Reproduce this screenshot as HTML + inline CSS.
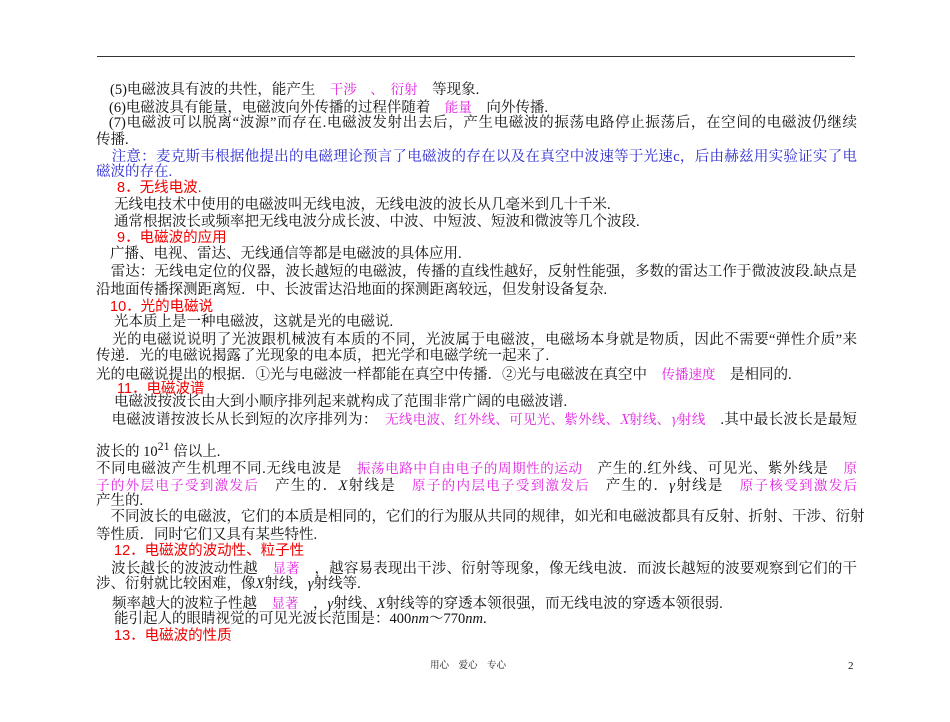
<html><head><meta charset="utf-8"><style>
body{margin:0;width:950px;height:722px;background:#fff;position:relative;overflow:hidden;font-family:"Liberation Serif","Noto Serif CJK SC",serif;color:#111}
.l{position:absolute;white-space:nowrap;font-size:14.5px;line-height:18px}
.j{width:761px;text-align:justify;text-align-last:justify}
.m{color:#e020e0;font-family:"Noto Serif CJK SC",serif;font-size:13.5px}
.b{color:#2a2ad0}
.r{color:#f00000;font-family:"Liberation Sans","Noto Sans CJK SC",sans-serif}
i{font-style:italic}
</style></head><body>
<div style="position:absolute;left:97px;top:56px;width:758px;height:1px;background:#333"></div>
<div class="l" style="left:110px;top:79px">(5)电磁波具有波的共性，能产生　<span class="m">干涉　、　衍射</span>　等现象.</div>
<div class="l" style="left:109px;top:97px">(6)电磁波具有能量，电磁波向外传播的过程伴随着　<span class="m">能量</span>　向外传播.</div>
<div class="l j" style="left:96px;top:114px">&nbsp;&nbsp;&nbsp;(7)电磁波可以脱离“波源”而存在.电磁波发射出去后，产生电磁波的振荡电路停止振荡后，在空间的电磁波仍继续</div>
<div class="l" style="left:96px;top:131px">传播.</div>
<div class="l j b" style="left:96px;top:148px">&nbsp;&nbsp;&nbsp;&nbsp;注意：麦克斯韦根据他提出的电磁理论预言了电磁波的存在以及在真空中波速等于光速c，后由赫兹用实验证实了电</div>
<div class="l b" style="left:96px;top:163px">磁波的存在.</div>
<div class="l r" style="left:117px;top:179px">8．无线电波.</div>
<div class="l" style="left:114px;top:196px">无线电技术中使用的电磁波叫无线电波，无线电波的波长从几毫米到几十千米.</div>
<div class="l" style="left:114px;top:213px">通常根据波长或频率把无线电波分成长波、中波、中短波、短波和微波等几个波段.</div>
<div class="l r" style="left:117px;top:229px">9．电磁波的应用</div>
<div class="l" style="left:110px;top:245px">广播、电视、雷达、无线通信等都是电磁波的具体应用.</div>
<div class="l j" style="left:96px;top:263px">&nbsp;&nbsp;&nbsp;&nbsp;雷达：无线电定位的仪器，波长越短的电磁波，传播的直线性越好，反射性能强，多数的雷达工作于微波波段.缺点是</div>
<div class="l" style="left:96px;top:281px">沿地面传播探测距离短．中、长波雷达沿地面的探测距离较远，但发射设备复杂.</div>
<div class="l r" style="left:110px;top:298px">10．光的电磁说</div>
<div class="l" style="left:114px;top:313px">光本质上是一种电磁波，这就是光的电磁说.</div>
<div class="l j" style="left:96px;top:331px">&nbsp;&nbsp;&nbsp;&nbsp;光的电磁说说明了光波跟机械波有本质的不同，光波属于电磁波，电磁场本身就是物质，因此不需要“弹性介质”来</div>
<div class="l" style="left:96px;top:347px">传递．光的电磁说揭露了光现象的电本质，把光学和电磁学统一起来了.</div>
<div class="l" style="left:96px;top:364px">光的电磁说提出的根据．①光与电磁波一样都能在真空中传播．②光与电磁波在真空中　<span class="m">传播速度</span>　是相同的.</div>
<div class="l r" style="left:117px;top:380px">11．电磁波谱</div>
<div class="l" style="left:114px;top:393px">电磁波按波长由大到小顺序排列起来就构成了范围非常广阔的电磁波谱.</div>
<div class="l j" style="left:96px;top:409px">&nbsp;&nbsp;&nbsp;&nbsp;电磁波谱按波长从长到短的次序排列为：　<span class="m">无线电波、红外线、可见光、紫外线、<i>X</i>射线、<i>γ</i>射线</span>　.其中最长波长是最短</div>
<div class="l" style="left:96px;top:437px">波长的 10<sup style="font-size:12px">21</sup> 倍以上.</div>
<div class="l j" style="left:96px;top:458px">不同电磁波产生机理不同.无线电波是　<span class="m">振荡电路中自由电子的周期性的运动</span>　产生的.红外线、可见光、紫外线是　<span class="m">原</span></div>
<div class="l j" style="left:96px;top:475px"><span class="m">子的外层电子受到激发后</span>　产生的．<i>X</i>射线是　<span class="m">原子的内层电子受到激发后</span>　产生的．<i>γ</i>射线是　<span class="m">原子核受到激发后</span></div>
<div class="l" style="left:96px;top:492px">产生的.</div>
<div class="l j" style="left:96px;top:508px">&nbsp;&nbsp;&nbsp;&nbsp;不同波长的电磁波，它们的本质是相同的，它们的行为服从共同的规律，如光和电磁波都具有反射、折射、干涉、衍射</div>
<div class="l" style="left:96px;top:526px">等性质．同时它们又具有某些特性.</div>
<div class="l r" style="left:114px;top:542px">12．电磁波的波动性、粒子性</div>
<div class="l j" style="left:96px;top:558px">&nbsp;&nbsp;&nbsp;&nbsp;波长越长的波波动性越　<span class="m">显著</span>　，越容易表现出干涉、衍射等现象，像无线电波．而波长越短的波要观察到它们的干</div>
<div class="l" style="left:96px;top:575px">涉、衍射就比较困难，像<i>X</i>射线，<i>γ</i>射线等.</div>
<div class="l" style="left:112px;top:593px">频率越大的波粒子性越　<span class="m">显著</span>　，<i>γ</i>射线、<i>X</i>射线等的穿透本领很强，而无线电波的穿透本领很弱.</div>
<div class="l" style="left:114px;top:610px">能引起人的眼睛视觉的可见光波长范围是：400<i>nm</i>～770<i>nm</i>.</div>
<div class="l r" style="left:114px;top:627px">13．电磁波的性质</div>
<div class="l" style="left:430px;top:657px;font-size:9.5px">用心　爱心　专心</div>
<div class="l" style="left:848px;top:657px;font-size:11px">2</div>
</body></html>
